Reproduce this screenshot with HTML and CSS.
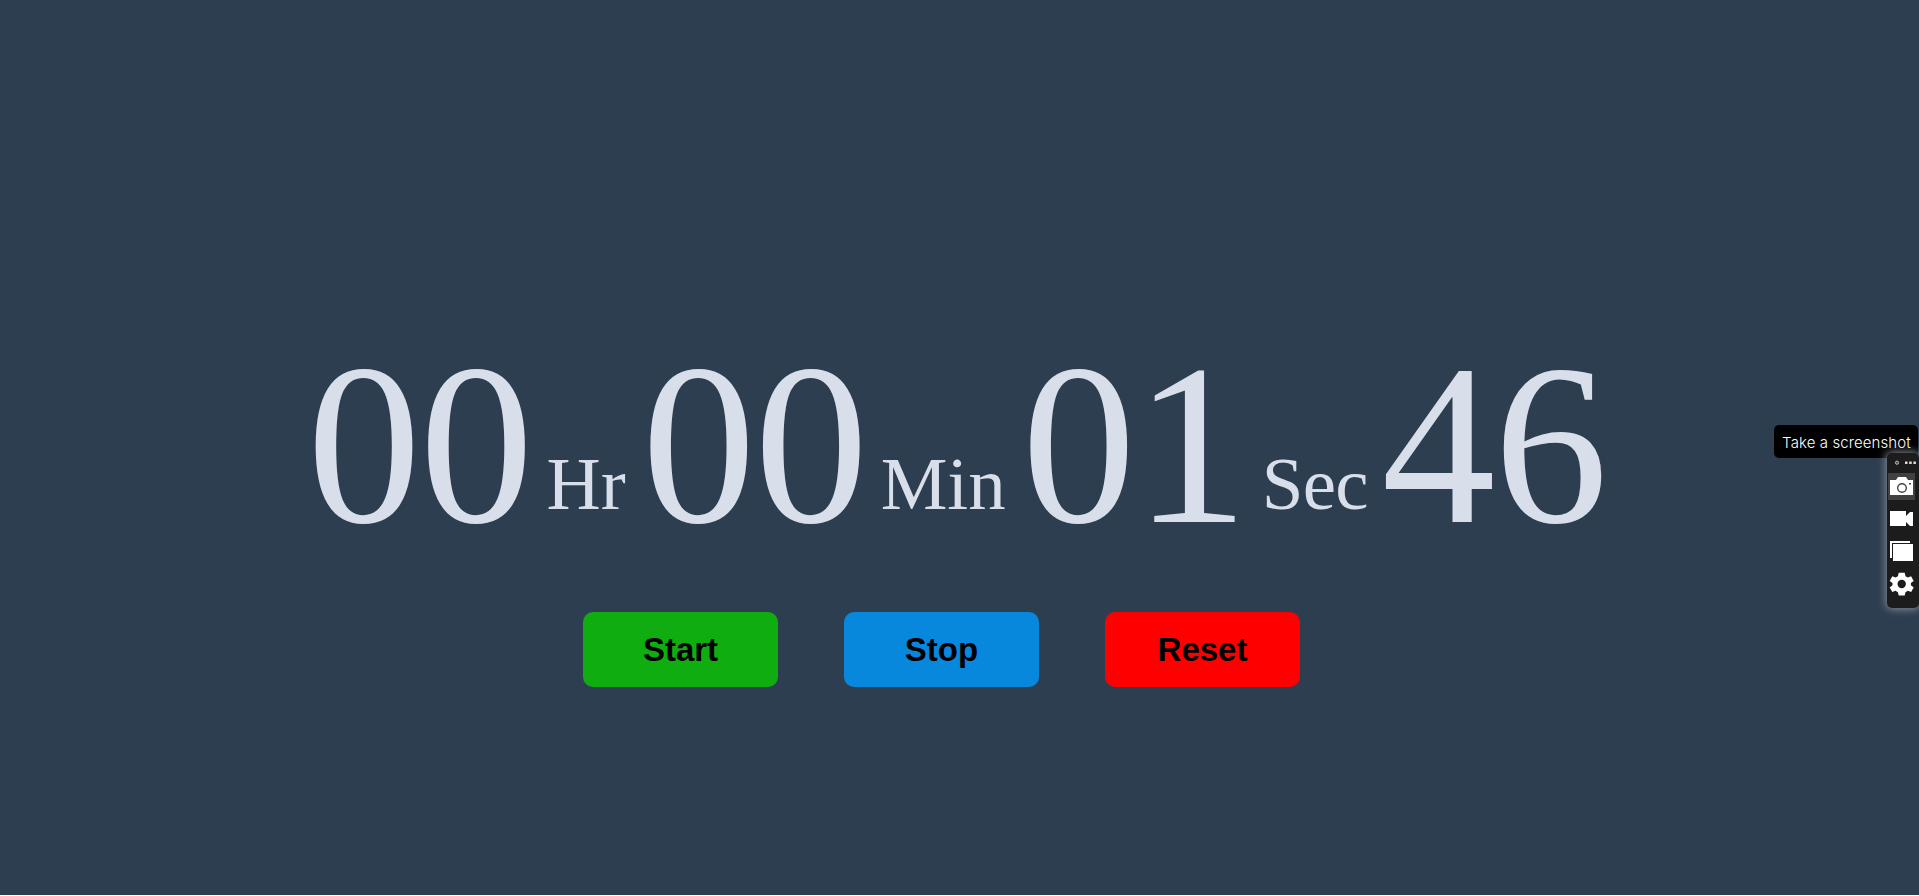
FILE: index.html
```html
<!DOCTYPE html>
<html lang="en">
<head>
<meta charset="utf-8">
<title>Stopwatch</title>
<link rel="stylesheet" href="styles.css">
</head>
<body>
<main class="stopwatch">
  <div class="time">
    <span class="digits">00</span><span class="label hr">Hr</span>
    <span class="digits">00</span><span class="label min">Min</span>
    <span class="digits">01</span><span class="label sec">Sec</span>
    <span class="digits">46</span>
  </div>
  <div class="buttons">
    <button class="btn start">Start</button>
    <button class="btn stop">Stop</button>
    <button class="btn reset">Reset</button>
  </div>
</main>
<div class="tooltip">Take a screenshot</div>
<aside class="recorder">
  <svg width="32" height="155" viewBox="0 0 32 155">
    <circle cx="10" cy="9.700" r="1.600" fill="#444" stroke="#bbb"/>
    <path d="M18 8.500h2.500v2.500h-2.500zM22.200 8.500h2.500v2.500h-2.500zM26.400 8.500h2.500v2.500h-2.500z" fill="#ddd"/>
    <path d="M1 20h27v27H1z" fill="#414141"/>
    <path d="M3 27h6l2-3h8l2 3h5v15H3z" fill="#fff"/>
    <circle cx="15" cy="35" r="4.300" fill="#fff" stroke="#444" stroke-width="1.400"/>
    <path d="M22 30h2v1.500h-2z" fill="#444"/>
    <path d="M3 58h16v5l4-4h3v14h-3l-4-4v4H3z" fill="#fff"/>
    <path d="M3 88h20v2H5v15H3z" fill="#fff"/>
    <path d="M6 91h20v17H6z" fill="#fff"/>
    <path transform="translate(14.700 131)" fill="#fff" fill-rule="evenodd" d="M-3-11.300H3L3.800-7.800 6.200-6.500 9.400-7.700 12-3 9.200-1V1.300L12 3.500 9.400 8 6.200 6.800 3.800 8.200 3 11.500H-3L-3.800 8.200-6.200 6.800-9.400 8-12 3.500-9.200 1.300V-1L-12-3-9.400-7.700-6.200-6.500-3.800-7.800ZM0-4.200A4.200 4.200 0 1 0 0 4.200 4.200 4.200 0 1 0 0-4.200Z"/>
  </svg>
</aside>
</body>
</html>
```
FILE: styles.css
```css
html {
  background: #fff;
}
body {
  margin: 0;
  height: 895px;
  overflow: hidden;
  font-family: "Liberation Serif", "Times New Roman", serif;
}
.stopwatch {
  box-sizing: border-box;
  height: 895px;
  padding-top: 333px;
  background: #2d3e50;
}
.time {
  display: flex;
  align-items: flex-end;
  margin-left: 307px;
  color: #d8dfea;
}
.digits {
  font-size: 228px;
  line-height: 225px;
  letter-spacing: -1.500px;
}
.label {
  font-size: 75px;
  line-height: 75px;
  margin-bottom: 37px;
}
.hr {
  margin-left: 14.500px;
  margin-right: 16px;
}
.min {
  margin-left: 14px;
  margin-right: 16px;
}
.sec {
  margin-left: 15px;
  margin-right: 13.500px;
  letter-spacing: -0.700px;
}
.buttons {
  display: flex;
  gap: 66px;
  margin: 54px 0 0 583px;
}
.btn {
  width: 195px;
  height: 75px;
  padding: 0;
  border: none;
  border-radius: 10px;
  color: #000;
  font: bold 33px "Liberation Sans", Arial, sans-serif;
}
.start {
  background: #10ad10;
}
.stop {
  background: #0888dd;
}
.reset {
  background: #ff0000;
}
.tooltip {
  position: absolute;
  top: 425px;
  right: 1px;
  box-sizing: border-box;
  width: 144px;
  height: 33px;
  padding-left: 1px;
  border-radius: 5px;
  background: #000;
  color: #fff;
  font: 300 15px/36px Inter, sans-serif;
  letter-spacing: 0.100px;
  text-align: center;
  white-space: nowrap;
}
.recorder {
  position: absolute;
  top: 453px;
  right: 0;
  width: 32px;
  height: 155px;
  border-radius: 5px;
  background: #1c1c1c;
  box-shadow: 0 0 8px 1px #8a8f96;
}
.recorder svg {
  display: block;
}
```
